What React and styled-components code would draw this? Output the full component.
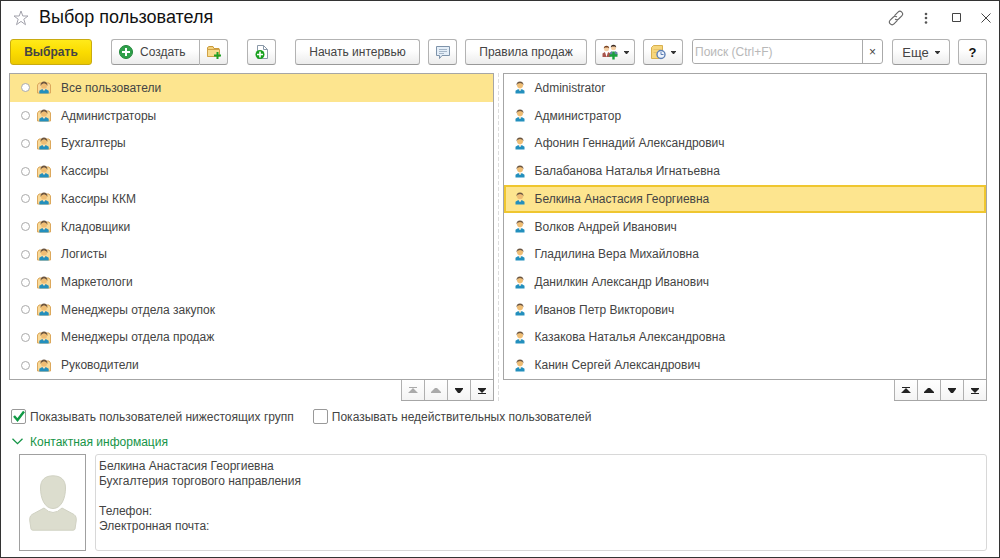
import React, { useState } from 'react'
import styled, { createGlobalStyle } from 'styled-components'

const groups = [
  'Все пользователи',
  'Администраторы',
  'Бухгалтеры',
  'Кассиры',
  'Кассиры ККМ',
  'Кладовщики',
  'Логисты',
  'Маркетологи',
  'Менеджеры отдела закупок',
  'Менеджеры отдела продаж',
  'Руководители',
]

const users = [
  'Administrator',
  'Администратор',
  'Афонин Геннадий Александрович',
  'Балабанова Наталья Игнатьевна',
  'Белкина Анастасия Георгиевна',
  'Волков Андрей Иванович',
  'Гладилина Вера Михайловна',
  'Данилкин Александр Иванович',
  'Иванов Петр Викторович',
  'Казакова Наталья Александровна',
  'Канин Сергей Александрович',
]

const info = `Белкина Анастасия Георгиевна
Бухгалтерия торгового направления

Телефон:
Электронная почта:`

export default function App() {
  const [group, setGroup] = useState(0)
  const [user, setUser] = useState(4)
  const [search, setSearch] = useState('')
  const [open, setOpen] = useState(true)

  return (
    <Window>
      <GlobalStyle />
      <Header>
        <IconButton aria-label="В избранное"><StarIcon /></IconButton>
        <Title>Выбор пользователя</Title>
        <WindowTools>
          <IconButton aria-label="Получить ссылку"><LinkIcon /></IconButton>
          <IconButton aria-label="Меню"><DotsIcon /></IconButton>
          <IconButton aria-label="Развернуть"><SquareIcon /></IconButton>
          <IconButton aria-label="Закрыть"><CloseIcon /></IconButton>
        </WindowTools>
      </Header>

      <Toolbar>
        <Group>
          <MainButton>Выбрать</MainButton>
        </Group>
        <Group>
          <Joined>
            <CreateButton><PlusIcon />Создать</CreateButton>
            <Button $w={29} aria-label="Создать группу"><FolderIcon /></Button>
          </Joined>
        </Group>
        <Group>
          <Button $w={29} aria-label="Создать копированием"><CopyIcon /></Button>
        </Group>
        <Button $w={125}>Начать интервью</Button>
        <Button $w={29} aria-label="Комментарий"><ChatIcon /></Button>
        <Button $w={122}>Правила продаж</Button>
        <Button $w={40} aria-label="Участники"><PeopleIcon /><Caret /></Button>
        <Button $w={40} aria-label="Отчеты"><ReportIcon /><Caret /></Button>
        <Search>
          <SearchInput
            aria-label="Поиск"
            placeholder="Поиск (Ctrl+F)"
            value={search}
            onChange={(e) => setSearch(e.target.value)}
          />
          <ClearButton aria-label="Очистить" onClick={() => setSearch('')}>×</ClearButton>
        </Search>
        <MoreButton $w={58}>Еще<Caret /></MoreButton>
        <HelpButton $w={29}>?</HelpButton>
      </Toolbar>

      <Panels>
        <Panel>
          <List role="listbox" aria-label="Группы">
            {groups.map((name, i) => (
              <GroupRow key={name} role="option" aria-selected={i === group} $active={i === group} onClick={() => setGroup(i)}>
                <Ring />
                <GroupIcon />
                {name}
              </GroupRow>
            ))}
          </List>
          <Pager atTop />
        </Panel>
        <Splitter />
        <Panel>
          <List role="listbox" aria-label="Пользователи">
            {users.map((name, i) => (
              <UserRow key={name} role="option" aria-selected={i === user} $active={i === user} onClick={() => setUser(i)}>
                <UserIcon />
                {name}
              </UserRow>
            ))}
          </List>
          <Pager />
        </Panel>
      </Panels>

      <Checks>
        <Label><Check type="checkbox" defaultChecked />Показывать пользователей нижестоящих групп</Label>
        <Label><Check type="checkbox" />Показывать недействительных пользователей</Label>
      </Checks>

      <SectionButton aria-expanded={open} onClick={() => setOpen(!open)}>
        <ChevronIcon />
        Контактная информация
      </SectionButton>
      {open && (
        <Contact>
          <Photo><PersonIcon /></Photo>
          <Info aria-label="Контактная информация" readOnly value={info} />
        </Contact>
      )}
    </Window>
  )
}

function Pager({ atTop }) {
  return (
    <PagerBox>
      <PagerButton disabled={atTop} aria-label="В начало">
        <svg width="10" height="7" viewBox="0 0 10 7"><path d="M1 0h8v1H1zM5 1l5 5H0z" /></svg>
      </PagerButton>
      <PagerButton disabled={atTop} aria-label="Вверх">
        <svg width="10" height="7" viewBox="0 0 10 7"><path d="M4 1h2l4 4v1H0V5z" /></svg>
      </PagerButton>
      <PagerButton aria-label="Вниз">
        <svg width="10" height="7" viewBox="0 0 10 7"><path d="M1 1h8v1L6 6H4L1 2z" /></svg>
      </PagerButton>
      <PagerButton aria-label="В конец">
        <svg width="10" height="7" viewBox="0 0 10 7"><path d="M1 1h8v1L5 6 1 2zM1 6h8v1H1z" /></svg>
      </PagerButton>
    </PagerBox>
  )
}

const StarIcon = () => (
  <svg width="16" height="16" viewBox="0 0 16 16" fill="none" stroke="#a3a3ac">
    <path d="M8 1l1.800 5H15l-4.200 3.200L12.500 14.700 8 11.400l-4.500 3.300 1.700-5.500L1 6h5.200z" />
  </svg>
)

const LinkIcon = () => (
  <svg width="16" height="16" viewBox="0 0 16 16" fill="none" stroke="#666" strokeWidth="1.100" strokeLinecap="round">
    <path d="M6.800 5.300L10 2.100a2.600 2.600 0 0 1 3.800 3.700L10.600 9a2.600 2.600 0 0 1-3.200.300" />
    <path d="M9.200 10.700L6 13.900a2.600 2.600 0 0 1-3.800-3.700L5.400 7a2.600 2.600 0 0 1 3.200-.300" />
  </svg>
)

const DotsIcon = () => (
  <svg width="4" height="12" viewBox="0 0 4 12" fill="#555">
    <circle cx="2" cy="2" r="1.300" /><circle cx="2" cy="6" r="1.300" /><circle cx="2" cy="10.500" r="1.300" />
  </svg>
)

const SquareIcon = () => (
  <svg width="9" height="9" viewBox="0 0 9 9" fill="none" stroke="#444"><path d="M.5.5h8v8h-8z" /></svg>
)

const CloseIcon = () => (
  <svg width="10" height="10" viewBox="0 0 10 10" fill="none" stroke="#444"><path d="M.5.5l9 9M9.500.5l-9 9" /></svg>
)

const PlusIcon = () => (
  <svg width="14" height="14" viewBox="0 0 14 14">
    <circle cx="7" cy="7" r="6.500" fill="#2fa04a" stroke="#23863b" />
    <path d="M7 3v8M3 7h8" stroke="#fff" strokeWidth="2" />
  </svg>
)

const FolderIcon = () => (
  <svg width="16" height="16" viewBox="0 0 16 16">
    <path d="M1.500 12.500v-9l1.500-1h4l1 2h5v2" fill="#f3d27c" stroke="#c99a3c" />
    <path d="M1.500 12.500v-7h12v7z" fill="#f8dc8f" stroke="#d0a247" />
    <path d="M11.500 8v7M8 11.500h7" stroke="#1fa024" strokeWidth="2" />
  </svg>
)

const CopyIcon = () => (
  <svg width="16" height="16" viewBox="0 0 16 16">
    <path d="M3.500 1.500h6l4 4v9h-10z" fill="#fff" stroke="#8a99a8" />
    <path d="M9.500 1.500v4h4" fill="none" stroke="#8a99a8" />
    <circle cx="6" cy="10.500" r="4.500" fill="#16a01c" />
    <path d="M6 7.500v6M3 10.500h6" stroke="#fff" strokeWidth="1.600" />
  </svg>
)

const ChatIcon = () => (
  <svg width="16" height="15" viewBox="0 0 16 15" fill="none">
    <path d="M1.500 1.500h13v9H7L4.500 13.500v-3h-3z" fill="#e4eef8" stroke="#7e93aa" />
    <path d="M4 4.500h8M4 6.500h8M4 8.500h5" stroke="#a5b6c8" />
  </svg>
)

const PeopleIcon = () => (
  <svg width="17" height="16" viewBox="0 0 17 16">
    <circle cx="4.500" cy="4.800" r="2.500" fill="#f5cfa4" />
    <path d="M1.800 4.500a2.700 2.700 0 0 1 5.400 0L6 3.500H3z" fill="#7a4320" />
    <path d="M.5 13V9.500L3 8l1.500 1.500L6 8l2.500 1.500V13z" fill="#a9544c" />
    <circle cx="11.500" cy="3.800" r="2.500" fill="#f5cfa4" />
    <path d="M8.800 3.500a2.700 2.700 0 0 1 5.400 0L13 2.500h-3z" fill="#3a2a22" />
    <path d="M8 11V8.500L10 7l1.500 1.500L13 7l2.500 1.500V11z" fill="#6683a6" />
    <path d="M3 8h3l-1.500 5zM10 6.500h3l-1.500 4z" fill="#fff" />
    <path d="M11.500 7.500v8M7.500 11.500h8" stroke="#18a03c" strokeWidth="2.400" />
  </svg>
)

const ReportIcon = () => (
  <svg width="16" height="16" viewBox="0 0 16 16">
    <path d="M3.500 1.500h9v13h-11v-11z" fill="#f6d67c" stroke="#d8b04f" />
    <path d="M3.500 5.500h7M3.500 8.500h4" fill="none" stroke="#e8c265" />
    <circle cx="11" cy="10.500" r="4" fill="#eef4fc" stroke="#5d7fb5" strokeWidth="1.400" />
    <path d="M11 8v2.500h2.500" fill="none" stroke="#5d7fb5" />
  </svg>
)

const Caret = () => (
  <svg width="5" height="3" viewBox="0 0 5 3"><path d="M0 0h5v.5L3 3H2L0 .5z" fill="#333" /></svg>
)

const UserIcon = () => (
  <svg width="10" height="13" viewBox="0 0 10 13">
    <circle cx="5" cy="4.200" r="3" fill="#efbd74" />
    <path d="M1.600 4.500C1.200 1.800 2.800.5 5 .5s3.800 1.300 3.400 4L7.500 2.800 5 2 2.500 2.800z" fill="#6b5540" />
    <path d="M.5 12.500V9.700L3.300 8 5 10l1.700-2 2.800 1.700v2.800z" fill="#238fbd" />
    <path d="M3.500 7.500L5 10l1.500-2.500z" fill="#f8e2bd" />
  </svg>
)

const GroupIcon = () => (
  <svg width="14" height="13" viewBox="0 0 14 13">
    <path d="M.5 12V4L2 2h3v3h4V2h3l1.500 2v8z" fill="#f9d998" stroke="#dca85c" />
    <circle cx="7" cy="4.700" r="3" fill="#efbd74" />
    <path d="M3.600 5C3.200 2 5 .5 7 .5s3.800 1.500 3.400 4.500L9.300 3.200 7 2.300l-2.300.9z" fill="#6b5540" />
    <path d="M2.300 12.500V9.700L5.300 8 7 9.700 8.700 8l3 1.700v2.800z" fill="#238fbd" />
    <path d="M5.500 7.700L7 9.700l1.500-2z" fill="#f8e2bd" />
  </svg>
)

const ChevronIcon = () => (
  <svg width="11" height="7" viewBox="0 0 11 7" fill="none" stroke="#159447" strokeWidth="1.300"><path d="M.5.7l5 5 5-5" /></svg>
)

const PersonIcon = () => (
  <svg width="48" height="56" viewBox="0 0 48 56" fill="#dcddce" stroke="#d0d1c2">
    <path d="M24 .8C16.500.8 11.500 4.500 11.500 13c0 10 4 20.500 12.500 20.500S36.500 23 36.500 13C36.500 4.500 31.500.8 24 .8z" />
    <path d="M15 33L3 39.500C1 41 .5 43 .8 46L2 54q.3 1.200 2 1.200h40q1.700 0 2-1.200l1.200-8c.3-3-.2-5-2.200-6.500L33 33q-9 9-18 0z" />
  </svg>
)

const GlobalStyle = createGlobalStyle`
  * {
    box-sizing: border-box;
  }
  body {
    margin: 0;
    background: #fff;
  }
  body, button, input, textarea {
    font-family: "Liberation Sans", Arial, sans-serif;
    font-size: 12px;
    color: #444;
  }
  svg {
    flex-shrink: 0;
  }
`

const Window = styled.div`
  display: flex;
  flex-direction: column;
  min-height: 100vh;
  padding: 0 12px 6px 8px;
  border: 1px solid #333;
`

const Header = styled.header`
  display: flex;
  align-items: center;
  height: 33px;
  padding-left: 4px;
`

const Title = styled.h1`
  flex: 1;
  margin: 0 0 0 10px;
  font-size: 18px;
  font-weight: normal;
  color: #111;
`

const WindowTools = styled.div`
  display: flex;
  gap: 2px;
`

const IconButton = styled.button`
  display: flex;
  align-items: center;
  justify-content: center;
  min-width: 16px;
  height: 24px;
  padding: 0;
  border: none;
  background: none;

  ${WindowTools} & {
    width: 28px;
  }
  ${WindowTools} &:last-child {
    margin-right: -13px;
  }
`

const Toolbar = styled.div`
  display: flex;
  gap: 8px;
  margin: 5px 0 8px;
  padding-left: 1px;
`

const Group = styled.div`
  display: flex;
  margin-right: 11px;
`

const Button = styled.button`
  display: flex;
  align-items: center;
  justify-content: center;
  gap: 5px;
  flex-shrink: 0;
  width: ${(p) => p.$w}px;
  height: 26px;
  padding: 0;
  border: 1px solid #b3b3b3;
  border-bottom-color: #999;
  border-radius: 3px;
  background: linear-gradient(#fff 40%, #ececec);
  white-space: nowrap;
`

const MainButton = styled(Button)`
  width: 82px;
  border-color: #c9ab10;
  background: linear-gradient(#ffea1a, #fbdc00 50%, #ecc900);
  color: #444;
  font-weight: bold;
`

const Joined = styled.div`
  display: flex;

  button:first-child {
    border-right: none;
    border-radius: 3px 0 0 3px;
  }
  button:last-child {
    border-radius: 0 3px 3px 0;
  }
`

const CreateButton = styled(Button)`
  justify-content: flex-start;
  width: 88px;
  gap: 7px;
  padding-left: 7px;
`

const MoreButton = styled(Button)`
  gap: 6px;
  font-size: 13px;
`

const HelpButton = styled(Button)`
  color: #111;
  font-size: 13px;
  font-weight: bold;
`

const Search = styled.div`
  display: flex;
  flex: 1;
  min-width: 0;
  height: 25px;
  margin: 0 1px;
  border: 1px solid #aaa;
  border-radius: 3px;
`

const SearchInput = styled.input`
  flex: 1;
  min-width: 0;
  padding: 0 2px;
  border: none;
  border-radius: 3px;

  &::placeholder {
    color: #b8b8b8;
  }
`

const ClearButton = styled.button`
  width: 20px;
  padding: 0;
  border: none;
  border-left: 1px solid #aaa;
  background: none;
`

const Panels = styled.div`
  display: flex;
  flex: 1;
`

const Panel = styled.div`
  display: flex;
  flex: 1;
  flex-direction: column;
  min-width: 0;
`

const Splitter = styled.div`
  width: 9px;
  background: repeating-linear-gradient(#ddd 0 4px, transparent 4px 6px) center / 1px 100% no-repeat;
`

const List = styled.ul`
  display: flex;
  flex: 1;
  flex-direction: column;
  margin: 0;
  padding: 0;
  border: 1px solid #a6a6a6;
  list-style: none;
`

const Row = styled.li`
  display: flex;
  flex: 1;
  align-items: center;
  gap: 10px;
  cursor: default;
`

const GroupRow = styled(Row)`
  padding-left: 11px;
  background: ${(p) => (p.$active ? '#fde58f' : 'none')};
`

const UserRow = styled(Row)`
  padding-left: 9px;
  border: 2px solid ${(p) => (p.$active ? '#efc62f' : 'transparent')};
  background: ${(p) => (p.$active ? '#fde58f' : 'none')};
`

const Ring = styled.span`
  width: 9px;
  height: 9px;
  margin-right: -3px;
  border: 1px solid #aaa;
  border-radius: 50%;
  background: #fff;
`

const PagerBox = styled.div`
  display: flex;
  align-self: flex-end;
  border: solid #a6a6a6;
  border-width: 0 1px 1px 0;
`

const PagerButton = styled.button`
  display: flex;
  align-items: center;
  justify-content: center;
  width: 23px;
  height: 20px;
  padding: 0;
  border: none;
  border-left: 1px solid #b0b0b0;
  background: linear-gradient(#fff, #f4f4f4);

  svg {
    fill: #222;
  }
  &:disabled svg {
    fill: #aaa;
  }
`

const Checks = styled.div`
  display: flex;
  gap: 19px;
  padding: 8px 0 0 2px;
`

const Label = styled.label`
  display: flex;
  align-items: center;
  gap: 4px;
  height: 15px;
`

const Check = styled.input`
  appearance: none;
  width: 15px;
  height: 15px;
  margin: 0;
  border: 1px solid #999;
  border-radius: 2px;
  background: #fff;

  &:checked {
    background: url("data:image/svg+xml,%3Csvg xmlns='http://www.w3.org/2000/svg' viewBox='0 0 13 13'%3E%3Cpath d='M2 6l3.500 4L12 1.500' fill='none' stroke='%23109a45' stroke-width='2.400'/%3E%3C/svg%3E") center no-repeat;
  }
`

const SectionButton = styled.button`
  display: flex;
  align-items: center;
  align-self: flex-start;
  gap: 7px;
  height: 15px;
  margin: 10px 0 5px;
  padding: 0 0 0 3px;
  border: none;
  background: none;
  color: #159447;
`

const Contact = styled.div`
  display: flex;
  gap: 9px;
  height: 97px;
  padding-left: 10px;
`

const Photo = styled.div`
  display: flex;
  align-items: center;
  justify-content: center;
  width: 67px;
  border: 1px solid #a0a0a0;
`

const Info = styled.textarea`
  flex: 1;
  padding: 4px 3px;
  border: 1px solid #d8d8d8;
  border-radius: 3px;
  outline: none;
  line-height: 15px;
  resize: none;
`
